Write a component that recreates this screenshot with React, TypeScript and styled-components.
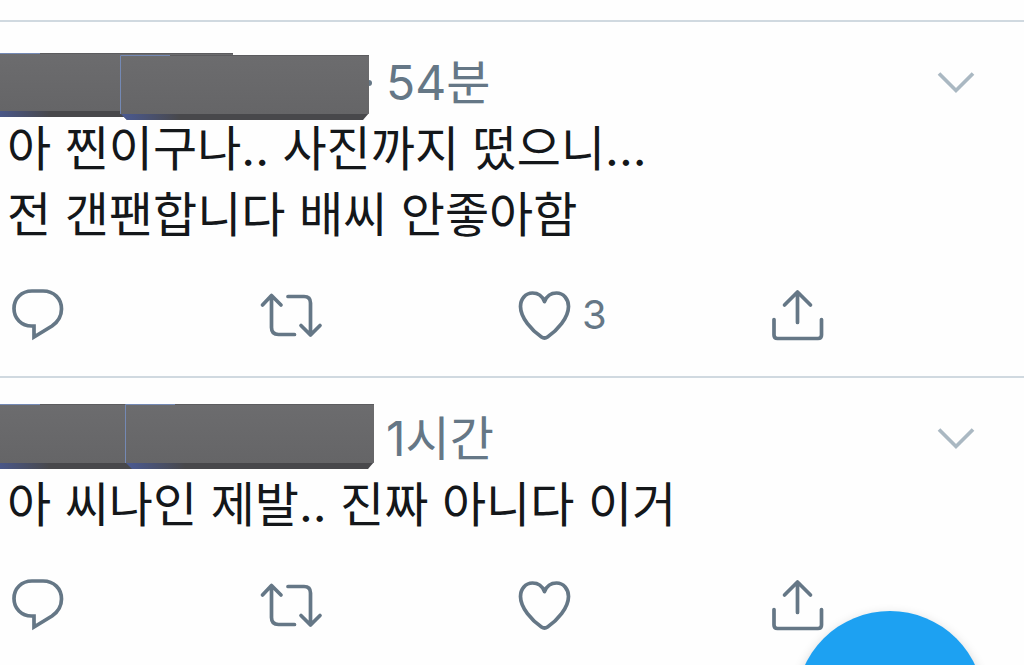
import React from "react";
import styled, { createGlobalStyle } from "styled-components";

const GlobalStyle = createGlobalStyle`
  * { box-sizing: border-box; }
  body {
    margin: 0;
    background: #fefefe;
    color: #14171a;
    font-family: Inter, "Noto Sans CJK KR", sans-serif;
    overflow: hidden;
  }
`;

const Timeline = styled.main`
  padding-top: 20px;
`;

const Tweet = styled.article`
  border-top: 2px solid #d0d9e0;
  padding: 28px 0 35px;
`;

const Header = styled.header`
  display: flex;
  align-items: center;
  height: 66px;
  padding-right: 48px;
`;

const Redaction = styled.svg`
  flex: none;
  display: block;
  width: 376px;
  height: 66px;
  margin-right: 10px;
`;

const Time = styled.time`
  flex: 1;
  color: #657786;
  font-size: 48px;
  line-height: 66px;
`;

const IconButton = styled.button`
  display: flex;
  align-items: center;
  gap: 12px;
  padding: 0;
  border: 0;
  background: none;
  color: #657786;
  font-family: inherit;
  font-size: 40px;
  line-height: 52px;
  cursor: pointer;
`;

const MenuButton = styled(IconButton)`
  color: #aab8c2;
`;

const Body = styled.p`
  margin: 0;
  padding-left: 7px;
  font-size: 48px;
  line-height: 66px;
`;

const Actions = styled.footer`
  display: grid;
  grid-template-columns: repeat(4, 1fr);
  padding: 41px 0 0 12px;
`;

const Icon = styled.svg`
  display: block;
  flex: none;
  overflow: visible;
  fill: none;
  stroke: currentColor;
  stroke-width: 3.7;
  stroke-linecap: round;
  stroke-linejoin: round;
`;

const ComposeButton = styled.button`
  position: fixed;
  right: 40px;
  bottom: -134px;
  width: 188px;
  height: 188px;
  padding: 0;
  border: 0;
  border-radius: 50%;
  background: #1da1f2;
  box-shadow: 0 4px 12px rgba(0, 0, 0, 0.2);
  cursor: pointer;
`;

type Block = { x: number; y: number; width: number; height: number };

function Slab({ x, y, width, height, fade }: Block & { fade: string }) {
  const right = x + width;
  const bottom = y + height;
  return (
    <g>
      <path
        d={`M${x} ${bottom - 7}H${right}L${right - 6} ${bottom}H${x + 7}Z`}
        fill="#48484b"
      />
      <path
        d={`M${x} ${bottom - 7}H${x + 60}V${bottom}H${x + 7}Z`}
        fill={`url(#${fade}-edge)`}
      />
      <rect x={x} y={y} width={width} height={height - 6} rx="1" fill={`url(#${fade}-face)`} />
      <path d={`M${x} ${y + 0.5}H${right}`} stroke="#5c5c5f" />
      <path
        d={`M${x + 50} ${y + 0.5}H${x + 0.5}V${bottom - 6}`}
        fill="none"
        stroke="#7489b4"
      />
    </g>
  );
}

function RedactedName({ id, back, front, dot }: { id: string; back: Block; front: Block; dot?: boolean }) {
  return (
    <Redaction viewBox="0 0 376 66" overflow="visible" aria-hidden="true">
      <defs>
        <linearGradient id={`${id}-edge`}>
          <stop offset="0" stopColor="#4a5a94" />
          <stop offset="1" stopColor="#48484b" />
        </linearGradient>
        <linearGradient id={`${id}-face`} x1="0" y1="0" x2="0" y2="1">
          <stop offset="0" stopColor="#6c6c6e" />
          <stop offset="1" stopColor="#656567" />
        </linearGradient>
      </defs>
      {dot && <circle cx="369" cy="33" r="3" fill="#657786" />}
      <Slab {...back} fade={id} />
      <Slab {...front} fade={id} />
    </Redaction>
  );
}

function ReplyIcon() {
  return (
    <Icon width="52" height="52" viewBox="0 0 52 52">
      <path
        strokeLinejoin="miter"
        d="M20 2H31C42 2 49.500 9.500 49.500 20C49.500 27 46.500 32.500 40 37L22 48V37H19.500C9.500 37 2 29.500 2 19.500C2 9.500 9.500 2 20 2Z"
      />
    </Icon>
  );
}

function RetweetIcon() {
  return (
    <Icon width="52" height="52" viewBox="0 0 52 52">
      <path d="M-2.500 16L6.500 6.500L16 16M6.500 7V38.500Q6.500 45.500 13.500 45.500H29.500" />
      <path d="M23 7.500H39Q45.500 7.500 45.500 14V46M36 36.500L45.500 46L55 36.500" />
    </Icon>
  );
}

function HeartIcon() {
  return (
    <Icon width="52" height="52" viewBox="0 0 52 52">
      <path d="M26.500 12.500C24.500 7.500 20.500 4 14.500 4C7.500 4 2.500 10 2.500 17.500C2.500 29 14 41.500 23.500 48Q26.500 50 29.500 48C39 41.500 50.500 29 50.500 17.500C50.500 10 45.500 4 38.500 4C32.500 4 28.500 7.500 26.500 12.500Z" />
    </Icon>
  );
}

function ShareIcon() {
  return (
    <Icon width="52" height="52" viewBox="0 0 52 52">
      <path d="M13.500 16L26.500 3L39.500 16M26.500 4V33.500" />
      <path d="M3 30.500V46Q3 49.500 6.500 49.500H47Q50.500 49.500 50.500 46V30.500" />
    </Icon>
  );
}

type TweetData = {
  id: string;
  time: string;
  lines: string[];
  likes?: number;
  back: Block;
  front: Block;
  dot?: boolean;
};

const tweets: TweetData[] = [
  {
    id: "first",
    time: "54분",
    lines: ["아 찐이구나.. 사진까지 떴으니...", "전 갠팬합니다 배씨 안좋아함"],
    likes: 3,
    back: { x: -10, y: 3, width: 243, height: 64 },
    front: { x: 120, y: 5, width: 249, height: 65 },
    dot: true,
  },
  {
    id: "second",
    time: "1시간",
    lines: ["아 씨나인 제발.. 진짜 아니다 이거"],
    back: { x: -10, y: -2, width: 226, height: 65 },
    front: { x: 125, y: -2, width: 249, height: 65 },
  },
];

export default function App() {
  return (
    <>
      <GlobalStyle />
      <Timeline lang="ko">
        {tweets.map((t) => (
          <Tweet key={t.id}>
            <Header>
              <RedactedName id={t.id} back={t.back} front={t.front} dot={t.dot} />
              <Time>{t.time}</Time>
              <MenuButton aria-label="더 보기">
                <Icon width="40" height="24" viewBox="0 0 40 24">
                  <path strokeLinecap="butt" strokeLinejoin="miter" d="M3 2.500L20 19.500L37 2.500" />
                </Icon>
              </MenuButton>
            </Header>
            <Body>
              {t.lines.map((line, i) => (
                <React.Fragment key={line}>
                  {i > 0 && <br />}
                  {line}
                </React.Fragment>
              ))}
            </Body>
            <Actions>
              <IconButton aria-label="답글"><ReplyIcon /></IconButton>
              <IconButton aria-label="리트윗"><RetweetIcon /></IconButton>
              <IconButton aria-label="마음에 들어요">
                <HeartIcon />
                {t.likes && <span>{t.likes}</span>}
              </IconButton>
              <IconButton aria-label="공유"><ShareIcon /></IconButton>
            </Actions>
          </Tweet>
        ))}
      </Timeline>
      <ComposeButton aria-label="트윗하기" />
    </>
  );
}
